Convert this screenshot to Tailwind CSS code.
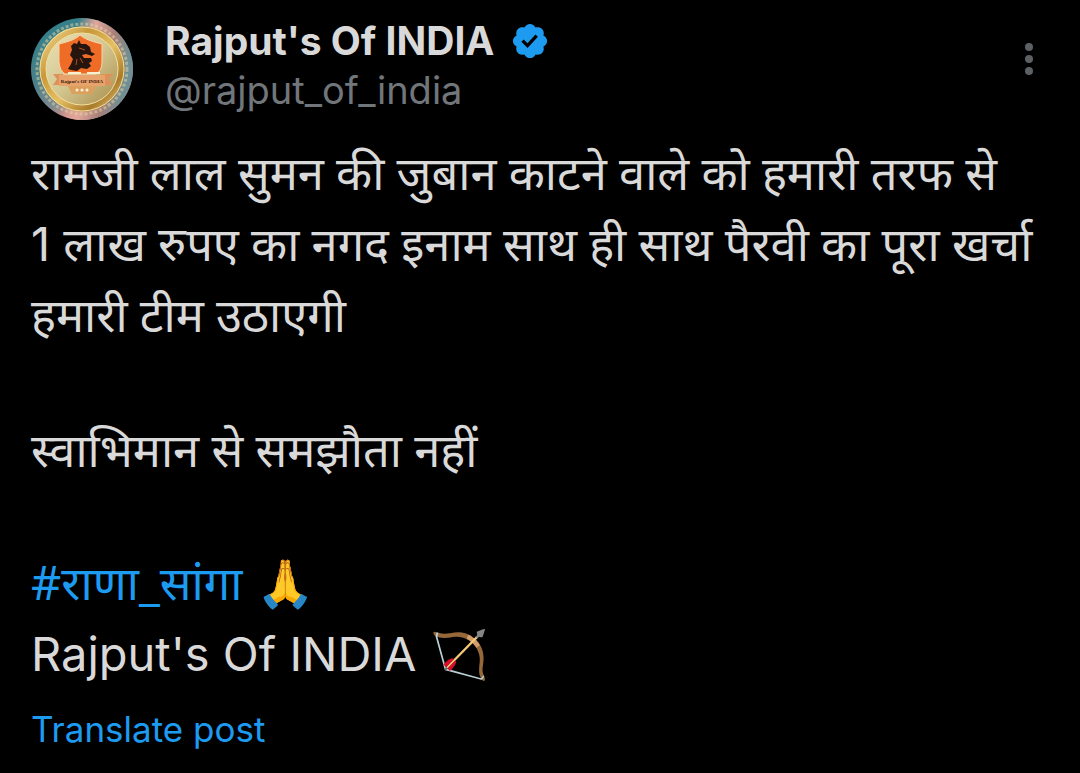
<!DOCTYPE html>
<html lang="hi">
<head>
<meta charset="utf-8">
<meta name="viewport" content="width=device-width, initial-scale=1">
<title>Rajput's Of INDIA</title>
<script src="https://cdn.jsdelivr.net/npm/@tailwindcss/browser@4"></script>
</head>
<body class="bg-black font-[Inter,'Noto_Sans',sans-serif] text-[#d9d9d9]">
<article class="px-[31px] pt-[18px] pb-4">
  <header class="flex items-start">
    <a href="#" aria-label="Rajput's Of INDIA" class="shrink-0">
      <svg class="size-[102px]" viewBox="0 0 102 102">
        <defs>
          <linearGradient id="bg" x1="0.2" y1="0" x2="0.6" y2="1">
            <stop offset="0" stop-color="#2f7f8c"/><stop offset=".5" stop-color="#4b7f88"/>
            <stop offset=".75" stop-color="#7c8a90"/><stop offset=".9" stop-color="#d98f88"/><stop offset="1" stop-color="#c9a6a4"/>
          </linearGradient>
          <linearGradient id="side" x1="0" y1="0" x2="1" y2="0.2">
            <stop offset=".45" stop-color="#e2a79c" stop-opacity="0"/><stop offset=".62" stop-color="#e2a79c"/>
            <stop offset=".82" stop-color="#a87f78"/><stop offset="1" stop-color="#6f8f94"/>
          </linearGradient>
          <linearGradient id="gold" x1="0" y1="0" x2="1" y2="1">
            <stop offset="0" stop-color="#f3dc96"/><stop offset=".3" stop-color="#c8983a"/>
            <stop offset=".55" stop-color="#e6c063"/><stop offset=".8" stop-color="#a97b2a"/><stop offset="1" stop-color="#ecd080"/>
          </linearGradient>
          <linearGradient id="plate" x1="0" y1="0" x2="1" y2="1">
            <stop offset="0" stop-color="#e9e0b4"/><stop offset=".5" stop-color="#d3c690"/><stop offset="1" stop-color="#a88c4a"/>
          </linearGradient>
          <clipPath id="round"><circle cx="51" cy="51" r="51"/></clipPath>
        </defs>
        <g clip-path="url(#round)">
          <rect width="102" height="102" fill="url(#bg)"/>
          <rect width="102" height="102" fill="url(#side)"/>
          <circle cx="51" cy="51" r="45" fill="none" stroke="#e8d7a4" stroke-width="3" stroke-dasharray="3 2" opacity=".5"/>
          <circle cx="51" cy="51" r="39" fill="none" stroke="url(#gold)" stroke-width="7"/>
          <circle cx="51" cy="51" r="42" fill="none" stroke="#f0dc9a" stroke-width="1"/>
          <circle cx="51" cy="51" r="36" fill="url(#plate)" stroke="#f2dfa0" stroke-width="1"/>
          <path d="M49 17 Q54 22 71 26 V44 Q71 53 65 56 H34 Q29 53 28 44 V26 Q45 22 49 17Z" fill="#ee6c26" stroke="#f7d3a8" stroke-width="1"/>
          <path d="M43 25l3 1 2-4 2 4 5 0 4 3 1 5 4 2-3 2-6-2-4 1 2 3 7 0 1 3-3 2 2 3-4 3-6-1-4 3-6-1-3-1 3-5 2-5-3-4 2-5-1-4z" fill="#26150f"/>
          <path d="M48 30l6 2m-5 8 3 5m-6-4-1 6" stroke="#b94d1c" stroke-width="1" fill="none"/>
          <path d="M22 56h10v11H22l4-6zM82 56H70v11h12l-4-6z" fill="#dd9158"/>
          <path d="M28 57h46v11H28z" fill="#e8a26c"/>
          <path d="M37 55h13m6 0h13" stroke="#fbeed0" stroke-width="2"/>
          <text x="51" y="65" text-anchor="middle" font-family="Liberation Serif, serif" font-weight="700" font-size="5" fill="#3a160b">Rajput's OF INDIA</text>
          <path d="M37 68h28l-4 8H41z" fill="#dca05c"/>
          <g fill="#fff0dc"><circle cx="46" cy="72" r="1.5"/><circle cx="51" cy="72" r="1.5"/><circle cx="56" cy="72" r="1.5"/></g>
        </g>
      </svg>
    </a>
    <div class="ml-8 min-w-0 flex-1">
      <div class="flex items-center gap-4">
        <h1 class="text-[39px] leading-[46px] font-bold">Rajput's Of INDIA</h1>
        <svg class="size-10" viewBox="0 0 24 24" role="img" aria-label="Verified account"><path fill="#1d9bf0" d="M22.25 12c0-1.43-.88-2.67-2.19-3.34.46-1.39.2-2.9-.81-3.91s-2.52-1.27-3.91-.81c-.66-1.31-1.91-2.19-3.34-2.19s-2.67.88-3.33 2.19c-1.4-.46-2.91-.2-3.92.81s-1.26 2.52-.8 3.91c-1.31.67-2.2 1.91-2.2 3.34s.89 2.67 2.2 3.34c-.46 1.39-.21 2.9.8 3.91s2.52 1.26 3.91.81c.67 1.31 1.91 2.19 3.34 2.19s2.68-.88 3.34-2.19c1.39.45 2.9.2 3.91-.81s1.27-2.52.81-3.91c1.31-.67 2.19-1.91 2.19-3.34z"/><path fill="#000" d="M10.54 16.2 6.8 12.46l1.41-1.42 2.26 2.26 4.8-5.23 1.47 1.36z"/></svg>
      </div>
      <p><a href="#" class="text-[38px] leading-[52px] text-[#71767b]">@rajput_of_india</a></p>
    </div>
    <button type="button" aria-label="More" class="mt-6 mr-3 flex h-9 w-4 items-center justify-center">
      <svg class="h-9 w-4 shrink-0" viewBox="0 0 16 36" fill="#5c6064"><circle cx="8" cy="5" r="4"/><circle cx="8" cy="17" r="4"/><circle cx="8" cy="29" r="4"/></svg>
    </button>
  </header>
  <div class="mt-[17px] text-[47px] leading-[71px]">
    <p class="font-['Noto_Sans',sans-serif]">रामजी लाल सुमन की जुबान काटने वाले को हमारी तरफ से<br><span class="font-[Inter]">1 </span>लाख रुपए का नगद इनाम साथ ही साथ पैरवी का पूरा खर्चा<br>हमारी टीम उठाएगी</p>
    <p class="mt-16 font-['Noto_Sans',sans-serif]">स्वाभिमान से समझौता नहीं</p>
    <p class="mt-[62px]"><a href="#" class="font-['Noto_Sans',sans-serif] text-[#1d9bf0]">#राणा_सांगा</a> 🙏<br>Rajput's Of INDIA 🏹</p>
  </div>
  <a href="#" class="mt-[18px] block w-fit text-[35px] leading-[44px] text-[#1d9bf0]">Translate post</a>
</article>
</body>
</html>
